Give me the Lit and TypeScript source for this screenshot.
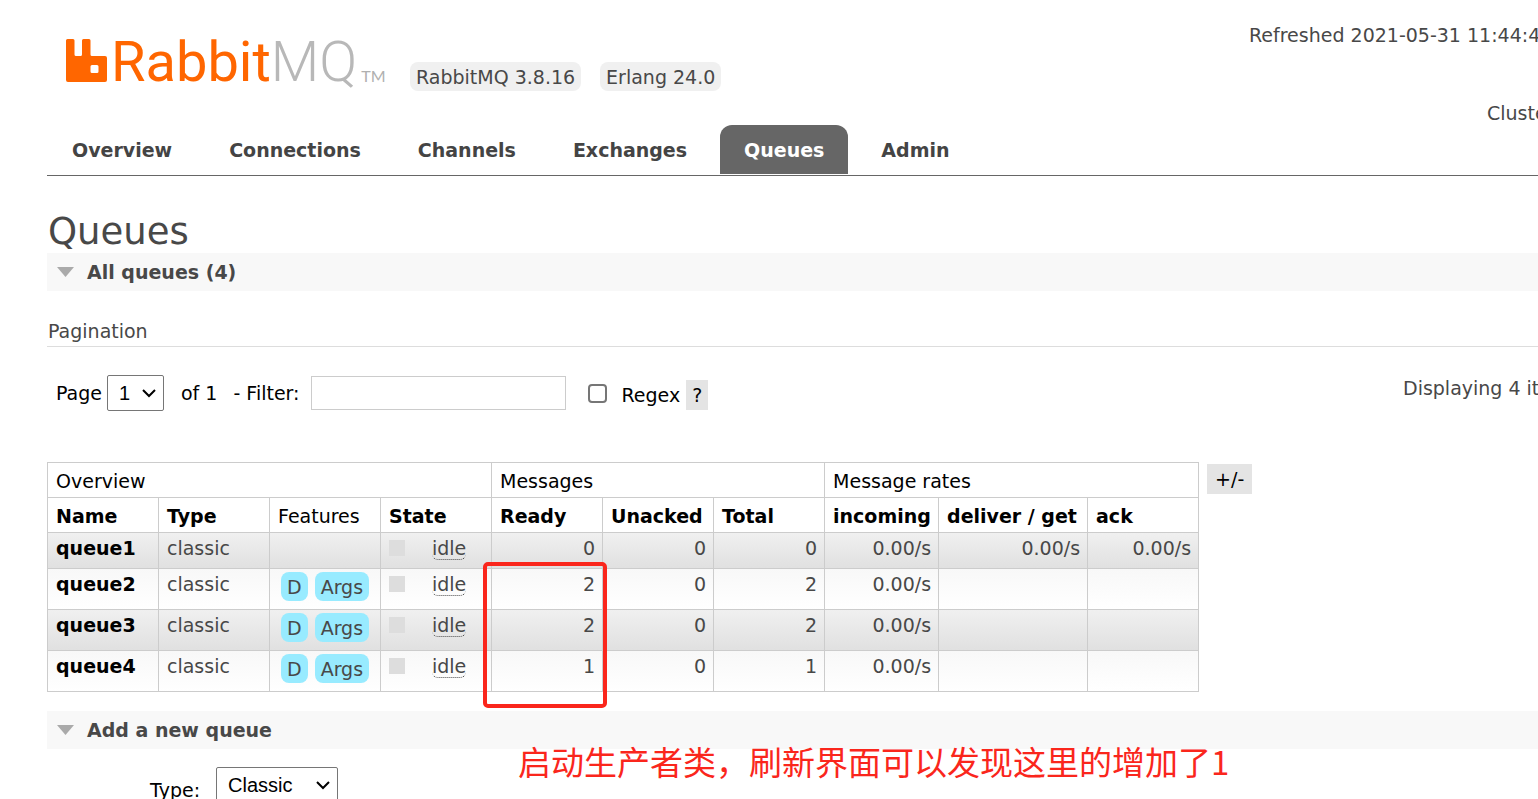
import { LitElement, html, css, svg, nothing } from "lit";
import { customElement, state } from "lit/decorators.js";
import { classMap } from "lit/directives/class-map.js";

interface Queue {
  name: string;
  durable: boolean;
  ready: number;
  unacked: number;
  total: number;
  incoming: string;
  deliver: string;
  ack: string;
}

const QUEUES: Queue[] = [
  { name: "queue1", durable: false, ready: 0, unacked: 0, total: 0, incoming: "0.00/s", deliver: "0.00/s", ack: "0.00/s" },
  { name: "queue2", durable: true, ready: 2, unacked: 0, total: 2, incoming: "0.00/s", deliver: "", ack: "" },
  { name: "queue3", durable: true, ready: 2, unacked: 0, total: 2, incoming: "0.00/s", deliver: "", ack: "" },
  { name: "queue4", durable: true, ready: 1, unacked: 0, total: 1, incoming: "0.00/s", deliver: "", ack: "" },
];

const TABS = ["Overview", "Connections", "Channels", "Exchanges", "Queues", "Admin"];

@customElement("rabbit-logo")
class RabbitLogo extends LitElement {
  static styles = css`
    :host { display: block; }
    .logo { display: flex; align-items: flex-end; height: 43px; color: #ff6600; text-decoration: none; }
    .mark { width: 41px; height: 43px; margin-right: 4px; flex: none; }
    .word { font: 400 56px/39px Roboto, sans-serif; white-space: nowrap; }
    .mq { color: #b8b8b8; font-weight: 300; }
    .tm { font: 16px/13px Lato, sans-serif; color: #b0b0b0; margin-left: 4px; }
  `;
  render() {
    return html`<a class="logo" href="#/">
      <svg class="mark" viewBox="0 0 41 43" aria-hidden="true">
        ${svg`<path fill="currentColor" fill-rule="evenodd" d="M1.5 0H7Q8.500 0 8.500 1.500V15.500Q8.500 17 10 17H14.500Q16 17 16 15.500V1.500Q16 0 17.500 0H23Q24.500 0 24.500 1.500V15.500Q24.500 17 26 17H39Q41 17 41 19V41Q41 43 39 43H2Q0 43 0 41V1.500Q0 0 1.500 0ZM26 26Q24.500 26 24.500 27.500V32.500Q24.500 34 26 34H31Q32.500 34 32.500 32.500V27.500Q32.500 26 31 26Z"/>`}
      </svg>
      <span class="word">Rabbit<span class="mq">MQ</span></span><span class="tm">TM</span>
    </a>`;
  }
}

@customElement("section-bar")
class SectionBar extends LitElement {
  static styles = css`
    :host { display: block; }
    .bar { margin: 0; padding: 7px 0 7px 10px; background: #f8f8f8; display: flex; align-items: center; gap: 13px; font-size: 19px; line-height: 24px; font-weight: bold; }
    .arrow { width: 17px; height: 10px; fill: #aaa; }
  `;
  render() {
    return html`<h2 class="bar">
      <svg class="arrow" viewBox="0 0 17 10" aria-hidden="true"><path d="M0 0H17L8.500 10Z" /></svg>
      <slot></slot>
    </h2>`;
  }
}

@customElement("app-root")
class AppRoot extends LitElement {
  @state() private active = "Queues";

  static styles = css`
    :host { display: block; position: relative; height: 100vh; overflow: hidden; background: #fff; color: #484848; font: 19px/24px "DejaVu Sans", sans-serif; }
    .header { display: flex; align-items: flex-start; padding: 23px 0 0 66px; }
    .brand { padding-top: 16px; width: 320px; }
    .versions { display: flex; gap: 19px; margin: 39px 0 0 24px; }
    .pill { background: #f0f0f0; border-radius: 8px; padding: 3px 6px 2px; white-space: nowrap; }
    .status { flex: none; width: 289px; margin: 0 0 0 auto; padding: 0; list-style: none; white-space: nowrap; display: flex; flex-direction: column; gap: 54px; }
    .cluster { padding-left: 238px; }
    .tabs { margin: 0 0 0 47px; padding: 0 0 1px 1px; border-bottom: 1px solid #666; display: flex; gap: 9px; }
    .tab { padding: 13px 24px 12px; border-radius: 12px 12px 0 0; font-weight: bold; color: #444; text-decoration: none; }
    .active { background: #666; color: #fff; }
    .main { padding-left: 47px; }
    .title { margin: 0; padding: 34px 0 0 1px; font-size: 37px; line-height: 43px; font-weight: normal; }
    .subtitle { margin: 28px 0 0; padding: 0 0 3px 1px; border-bottom: 1px solid #ddd; font-size: 19px; line-height: 24px; font-weight: normal; }
    .filters { display: flex; align-items: center; color: #000; padding: 28px 0 0 9px; height: 36px; white-space: nowrap; }
    .select { box-sizing: border-box; height: 36px; margin: 0; padding: 0 32px 0 11px; border: 1px solid #767676; border-radius: 2px; color: #000; font: 20px "Liberation Sans", sans-serif; appearance: none; background: #fff url('data:image/svg+xml,<svg xmlns="http://www.w3.org/2000/svg" width="14" height="9"><path d="M1 1L7 7L13 1" fill="none" stroke="black" stroke-width="2"/></svg>') no-repeat right 7px center; }
    .page { margin-left: 5px; }
    .count { margin-left: 17px; }
    .filter-label { margin-left: 16px; }
    .filter { box-sizing: border-box; width: 255px; height: 34px; margin-left: 12px; padding: 4px; border: 1px solid #ccc; font: inherit; }
    .regex { appearance: none; box-sizing: border-box; width: 19px; height: 19px; margin: 0 14px 0 22px; border: 2px solid #767676; border-radius: 4px; background: #fff; }
    .regex:checked { background: #767676; }
    .regex-group { display: flex; align-items: center; gap: 6px; padding-top: 4px; }
    .small-button { border: 0; border-radius: 0; background: #e4e4e4; color: #000; font: inherit; padding: 3px 6px; }
    .shown { flex: none; width: 135px; margin-left: auto; color: #484848; align-self: flex-start; padding-top: 1px; }
    .list-area { position: relative; display: flex; align-items: flex-start; gap: 8px; margin-top: 51px; }
    .list { border-collapse: collapse; table-layout: fixed; width: 1152px; color: #484848; }
    .list th { color: #000; text-align: left; padding: 6px 8px 4px; border: 1px solid #ccc; font-weight: bold; white-space: nowrap; }
    .list .group, .list .plain { font-weight: normal; }
    .list td { padding: 3px 7px 8px 8px; border: 1px solid #ccc; vertical-align: top; }
    .col { width: 111px; }
    .col-incoming { width: 114px; }
    .col-deliver { width: 149px; }
    .odd { background: linear-gradient(#f0f0f0, #e0e0e0); }
    .even { background: linear-gradient(#f8f8f8, #fff); }
    .link { color: #000; font-weight: bold; text-decoration: none; }
    .num { text-align: right; }
    .features { display: flex; gap: 7px; padding-left: 3px; }
    .badge { background: #98ebff; border-radius: 8px; padding: 3px 6px 2px; }
    .status-cell { display: flex; align-items: center; gap: 27px; height: 24px; }
    .square { width: 16px; height: 16px; background: #ddd; }
    .idle { border-bottom: 1px dotted #484848; border-radius: 6px; line-height: 22px; padding-top: 1px; cursor: default; }
    .columns { margin-top: 2px; padding: 3px 8px; }
    .highlight { position: absolute; left: 436px; top: 100px; width: 116px; height: 138px; border: 4px solid #fa261c; border-radius: 5px; }
    .note { position: absolute; left: 471px; top: 275px; margin: 0; color: #fa261c; font: 33px/48px "Noto Sans CJK SC", sans-serif; white-space: nowrap; z-index: 1; }
    .add { margin-top: 19px; }
    .form { display: flex; align-items: center; gap: 16px; color: #000; padding: 18px 0 0 103px; }
    .type-label { padding-top: 9px; }
    .kind { width: 122px; }
  `;

  private renderQueue(q: Queue, i: number) {
    return html`<tr class=${i % 2 ? "even" : "odd"}>
      <td><a class="link" href="#/queues/${q.name}">${q.name}</a></td>
      <td>classic</td>
      <td>${q.durable ? html`<div class="features"><span class="badge">D</span><span class="badge">Args</span></div>` : nothing}</td>
      <td><div class="status-cell"><span class="square"></span><span class="idle">idle</span></div></td>
      <td class="num">${q.ready}</td>
      <td class="num">${q.unacked}</td>
      <td class="num">${q.total}</td>
      <td class="num">${q.incoming}</td>
      <td class="num">${q.deliver}</td>
      <td class="num">${q.ack}</td>
    </tr>`;
  }

  render() {
    return html`
      <header class="header">
        <rabbit-logo class="brand"></rabbit-logo>
        <div class="versions"><span class="pill">RabbitMQ 3.8.16</span><span class="pill">Erlang 24.0</span></div>
        <ul class="status">
          <li>Refreshed 2021-05-31 11:44:4</li>
          <li class="cluster">Cluste</li>
        </ul>
      </header>
      <nav class="tabs">
        ${TABS.map((t) => html`<a href="#/${t.toLowerCase()}" class=${classMap({ tab: true, active: t === this.active })} @click=${() => (this.active = t)}>${t}</a>`)}
      </nav>
      <main class="main">
        <h1 class="title">Queues</h1>
        <section-bar>All queues (4)</section-bar>
        <h3 class="subtitle">Pagination</h3>
        <div class="filters">
          <label for="page">Page</label>
          <select id="page" class="select page"><option>1</option></select>
          <span class="count">of 1</span>
          <label class="filter-label" for="filter">- Filter:</label>
          <input id="filter" class="filter" type="text" />
          <input id="regex" class="regex" type="checkbox" />
          <div class="regex-group">
            <label for="regex">Regex</label>
            <button class="small-button">?</button>
          </div>
          <span class="shown">Displaying 4 it</span>
        </div>
        <div class="list-area">
          <table class="list">
            <colgroup>
              <col class="col" span="7" /><col class="col-incoming" /><col class="col-deliver" /><col class="col" />
            </colgroup>
            <thead>
              <tr>
                <th class="group" colspan="4">Overview</th>
                <th class="group" colspan="3">Messages</th>
                <th class="group" colspan="3">Message rates</th>
              </tr>
              <tr>
                <th>Name</th><th>Type</th><th class="plain">Features</th><th>State</th>
                <th>Ready</th><th>Unacked</th><th>Total</th>
                <th>incoming</th><th>deliver / get</th><th>ack</th>
              </tr>
            </thead>
            <tbody>${QUEUES.map((q, i) => this.renderQueue(q, i))}</tbody>
          </table>
          <button class="small-button columns">+/-</button>
          <div class="highlight"></div>
          <p class="note">启动生产者类，刷新界面可以发现这里的增加了1</p>
        </div>
        <section-bar class="add">Add a new queue</section-bar>
        <div class="form">
          <label class="type-label" for="kind">Type:</label>
          <select id="kind" class="select kind"><option>Classic</option></select>
        </div>
      </main>
    `;
  }
}
